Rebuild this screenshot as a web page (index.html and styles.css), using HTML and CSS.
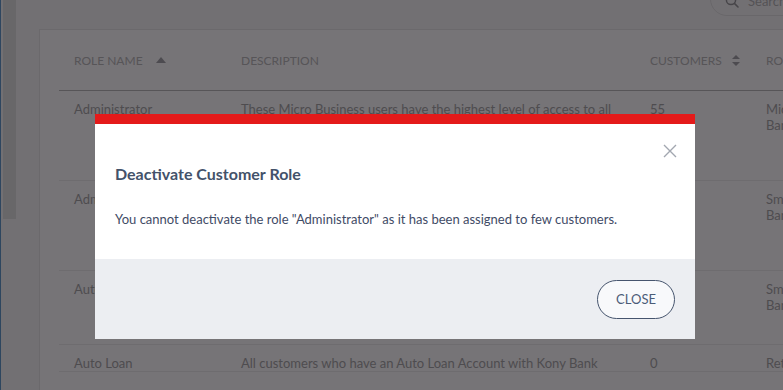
FILE: index.html
```html
<!DOCTYPE html>
<html lang="en">
<head>
    <meta charset="UTF-8">
    <meta name="viewport" content="width=device-width, initial-scale=1.0">
    <title>Customer Roles</title>
    <link rel="stylesheet" href="styles.css">
</head>
<body>
    <div class="app">
        <div class="nav-edge"></div>
        <div class="rail"><div class="thumb"></div></div>
        <main class="main">
            <div class="toolbar">
                <div class="search">
                    <svg class="search-icon" width="14" height="14" viewBox="0 0 14 14">
                        <circle cx="6" cy="6" r="4.6" fill="none" stroke="currentColor" stroke-width="1.5"/>
                        <path d="M9.4 9.4 L13 13" stroke="currentColor" stroke-width="1.6" stroke-linecap="round"/>
                    </svg>
                    <span>Search</span>
                </div>
            </div>
            <section class="card">
                <table class="roles">
                    <thead>
                        <tr>
                            <th class="col-name">ROLE NAME <span class="sort-up"></span></th>
                            <th class="col-desc">DESCRIPTION</th>
                            <th class="col-cust">CUSTOMERS <span class="sort-both"></span></th>
                            <th class="col-type">ROLE TYPE</th>
                        </tr>
                    </thead>
                    <tbody>
                        <tr class="tall">
                            <td>Administrator</td>
                            <td>These Micro Business users have the highest level of access to all accounts and features</td>
                            <td>55</td>
                            <td>Micro<br>Banking</td>
                        </tr>
                        <tr class="tall">
                            <td>Administrator</td>
                            <td>Small Business administrators with access to all accounts</td>
                            <td>12</td>
                            <td>Small<br>Banking</td>
                        </tr>
                        <tr class="mid">
                            <td>Auto Loan Admin</td>
                            <td>Customers who can manage auto loans</td>
                            <td>3</td>
                            <td>Small<br>Banking</td>
                        </tr>
                        <tr>
                            <td>Auto Loan</td>
                            <td>All customers who have an Auto Loan Account with Kony Bank</td>
                            <td>0</td>
                            <td>Retail</td>
                        </tr>
                    </tbody>
                </table>
            </section>
        </main>
    </div>

    <div class="overlay"></div>

    <div class="modal">
        <div class="modal-body">
            <button class="modal-x" aria-label="Close">
                <svg width="14" height="14" viewBox="0 0 14 14">
                    <path d="M1 1 L13 13 M13 1 L1 13" stroke="currentColor" stroke-width="1.4"/>
                </svg>
            </button>
            <h2>Deactivate Customer Role</h2>
            <p>You cannot deactivate the role "Administrator" as it has been assigned to few customers.</p>
        </div>
        <div class="modal-footer">
            <button class="btn-close">CLOSE</button>
        </div>
    </div>
</body>
</html>
```

FILE: styles.css
```css
body {
    margin: 0;
    font-family: Lato, "Open Sans", sans-serif;
    background: #e5e1e7;
    overflow: hidden;
}
.app {
    display: flex;
    height: 390px;
}
.nav-edge {
    width: 1px;
    background: #5d8cbf;
}
.rail {
    width: 14px;
    padding-left: 2px;
}
.rail .thumb {
    width: 13px;
    height: 219px;
    background: #d0ced2;
}
.main {
    flex: 1;
    padding-left: 22px;
    min-width: 0;
}
.toolbar {
    height: 47px;
    margin-top: -18px;
    display: flex;
    justify-content: flex-end;
}
.search {
    width: 120px;
    height: 34px;
    margin-right: -47px;
    border: 1px solid #d2ced4;
    border-radius: 18px;
    display: flex;
    align-items: center;
    gap: 9px;
    padding-left: 14px;
    padding-top: 4px;
    color: #aaa6ac;
    font-size: 13px;
    box-sizing: border-box;
}
.search-icon {
    color: #8f8b92;
}
.card {
    background: #ece8ee;
    border-top: 1px solid #d6d2d8;
    border-left: 1px solid #d6d2d8;
    padding-left: 19px;
    height: 400px;
    overflow: hidden;
}
.roles {
    border-collapse: collapse;
    width: 800px;
    color: #9d999f;
    font-size: 13px;
}
.roles th {
    height: 60px;
    padding: 0 0 0 15px;
    text-align: left;
    font-weight: 400;
    font-size: 12px;
    color: #aeaab0;
    border-bottom: 1px solid #aeaab1;
    white-space: nowrap;
}
.roles td {
    padding: 10px 15px 0;
    vertical-align: top;
    line-height: 16px;
    border-bottom: 1px solid #dcd8de;
}
.roles tr.tall td {
    height: 79px;
}
.roles tr.mid td {
    height: 63px;
}
.col-name { width: 152px; }
.col-desc { width: 394px; }
.col-cust { width: 101px; }
.sort-up {
    display: inline-block;
    margin-left: 10px;
    vertical-align: 2px;
    border-left: 5px solid transparent;
    border-right: 5px solid transparent;
    border-bottom: 6px solid #9a96a0;
}
.sort-both {
    display: inline-block;
    position: relative;
    width: 8px;
    height: 11px;
    margin-left: 7px;
    vertical-align: -1px;
}
.sort-both::before,
.sort-both::after {
    content: "";
    position: absolute;
    left: 0;
    border-left: 4px solid transparent;
    border-right: 4px solid transparent;
}
.sort-both::before {
    top: 0;
    border-bottom: 4px solid #9a96a0;
}
.sort-both::after {
    bottom: 0;
    border-top: 4px solid #9a96a0;
}
.overlay {
    position: fixed;
    inset: 0;
    background: rgba(0, 0, 0, 0.5);
}
.modal {
    position: fixed;
    left: 95px;
    top: 114px;
    width: 600px;
    border-top: 10px solid #e41a1a;
    background: #ffffff;
}
.modal-body {
    position: relative;
    height: 135px;
    padding: 0 21px 0 20px;
    box-sizing: border-box;
    overflow: hidden;
}
.modal-body h2 {
    margin: 40px 0 0;
    font-size: 16px;
    font-weight: 700;
    line-height: 20px;
    color: #43526a;
}
.modal-body p {
    margin: 27px 0 0;
    font-size: 13px;
    line-height: 16px;
    color: #3f4b66;
}
.modal-x {
    position: absolute;
    top: 20px;
    right: 18px;
    padding: 0;
    border: none;
    background: none;
    color: #a2a7b0;
    cursor: pointer;
}
.modal-footer {
    height: 80px;
    background: #eceef2;
    display: flex;
    justify-content: flex-end;
    align-items: center;
    padding-right: 20px;
}
.btn-close {
    width: 78px;
    height: 39px;
    border: 1px solid #46556e;
    border-radius: 20px;
    background: #f8f9fb;
    color: #4b5c78;
    font-family: Lato, sans-serif;
    font-size: 13px;
    cursor: pointer;
}
```
